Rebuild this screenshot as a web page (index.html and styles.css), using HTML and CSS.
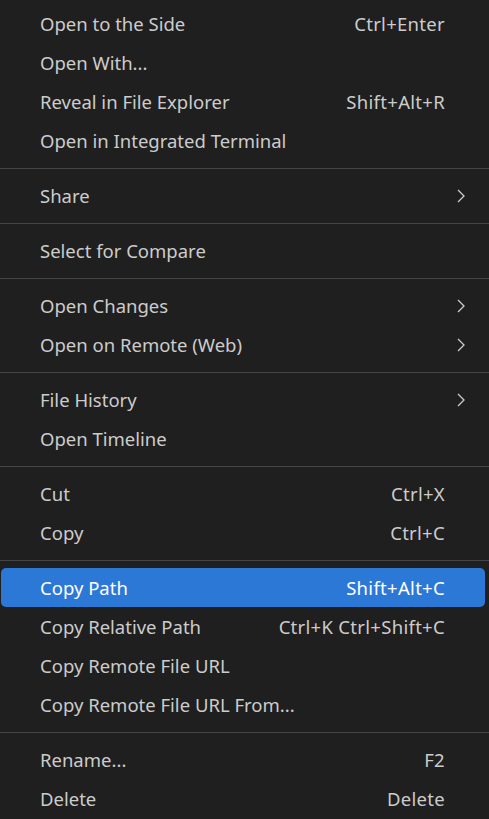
FILE: index.html
```html
<!DOCTYPE html>
<html>
<head>
<meta charset="utf-8">
<link rel="stylesheet" href="styles.css">
</head>
<body>
<div class="menu">
  <div class="item"><span class="label">Open to the Side</span><span class="key">Ctrl+Enter</span></div>
  <div class="item"><span class="label">Open With...</span></div>
  <div class="item"><span class="label">Reveal in File Explorer</span><span class="key">Shift+Alt+R</span></div>
  <div class="item"><span class="label">Open in Integrated Terminal</span></div>
  <div class="sep"></div>
  <div class="item"><span class="label">Share</span><svg class="chev" viewBox="0 0 8 14"><path d="M1 1 L7 7 L1 13" fill="none" stroke="#cccccc" stroke-width="1.3"/></svg></div>
  <div class="sep"></div>
  <div class="item"><span class="label">Select for Compare</span></div>
  <div class="sep"></div>
  <div class="item"><span class="label">Open Changes</span><svg class="chev" viewBox="0 0 8 14"><path d="M1 1 L7 7 L1 13" fill="none" stroke="#cccccc" stroke-width="1.3"/></svg></div>
  <div class="item"><span class="label">Open on Remote (Web)</span><svg class="chev" viewBox="0 0 8 14"><path d="M1 1 L7 7 L1 13" fill="none" stroke="#cccccc" stroke-width="1.3"/></svg></div>
  <div class="sep"></div>
  <div class="item"><span class="label">File History</span><svg class="chev" viewBox="0 0 8 14"><path d="M1 1 L7 7 L1 13" fill="none" stroke="#cccccc" stroke-width="1.3"/></svg></div>
  <div class="item"><span class="label">Open Timeline</span></div>
  <div class="sep"></div>
  <div class="item"><span class="label">Cut</span><span class="key">Ctrl+X</span></div>
  <div class="item"><span class="label">Copy</span><span class="key">Ctrl+C</span></div>
  <div class="sep"></div>
  <div class="item active"><span class="label">Copy Path</span><span class="key">Shift+Alt+C</span></div>
  <div class="item"><span class="label">Copy Relative Path</span><span class="key">Ctrl+K Ctrl+Shift+C</span></div>
  <div class="item"><span class="label">Copy Remote File URL</span></div>
  <div class="item"><span class="label">Copy Remote File URL From...</span></div>
  <div class="sep"></div>
  <div class="item"><span class="label">Rename...</span><span class="key">F2</span></div>
  <div class="item"><span class="label">Delete</span><span class="key">Delete</span></div>
</div>
</body>
</html>
```

FILE: styles.css
```css
html, body {
  margin: 0;
  padding: 0;
  background: #1f1f1f;
}
.menu {
  width: 489px;
  height: 819px;
  overflow: hidden;
  background: #1f1f1f;
  padding-top: 4px;
  box-sizing: border-box;
  font-family: "Noto Sans", "Open Sans", sans-serif;
  font-size: 18.5px;
  color: #cccccc;
}
.item {
  display: flex;
  align-items: center;
  height: 39px;
  margin: 0 4px 0 1px;
  padding: 0 20px 0 39px;
  border-radius: 5px;
  box-sizing: border-box;
  white-space: nowrap;
}
.label {
  flex: 1;
}
.key {
  padding-right: 20px;
  letter-spacing: 0.3px;
}
.chev {
  width: 8px;
  height: 14px;
  flex: none;
}
.item.active {
  background: #2b78d6;
  color: #ffffff;
}
.sep {
  height: 1px;
  background: #454545;
  margin: 8px 0 7px;
}
```
